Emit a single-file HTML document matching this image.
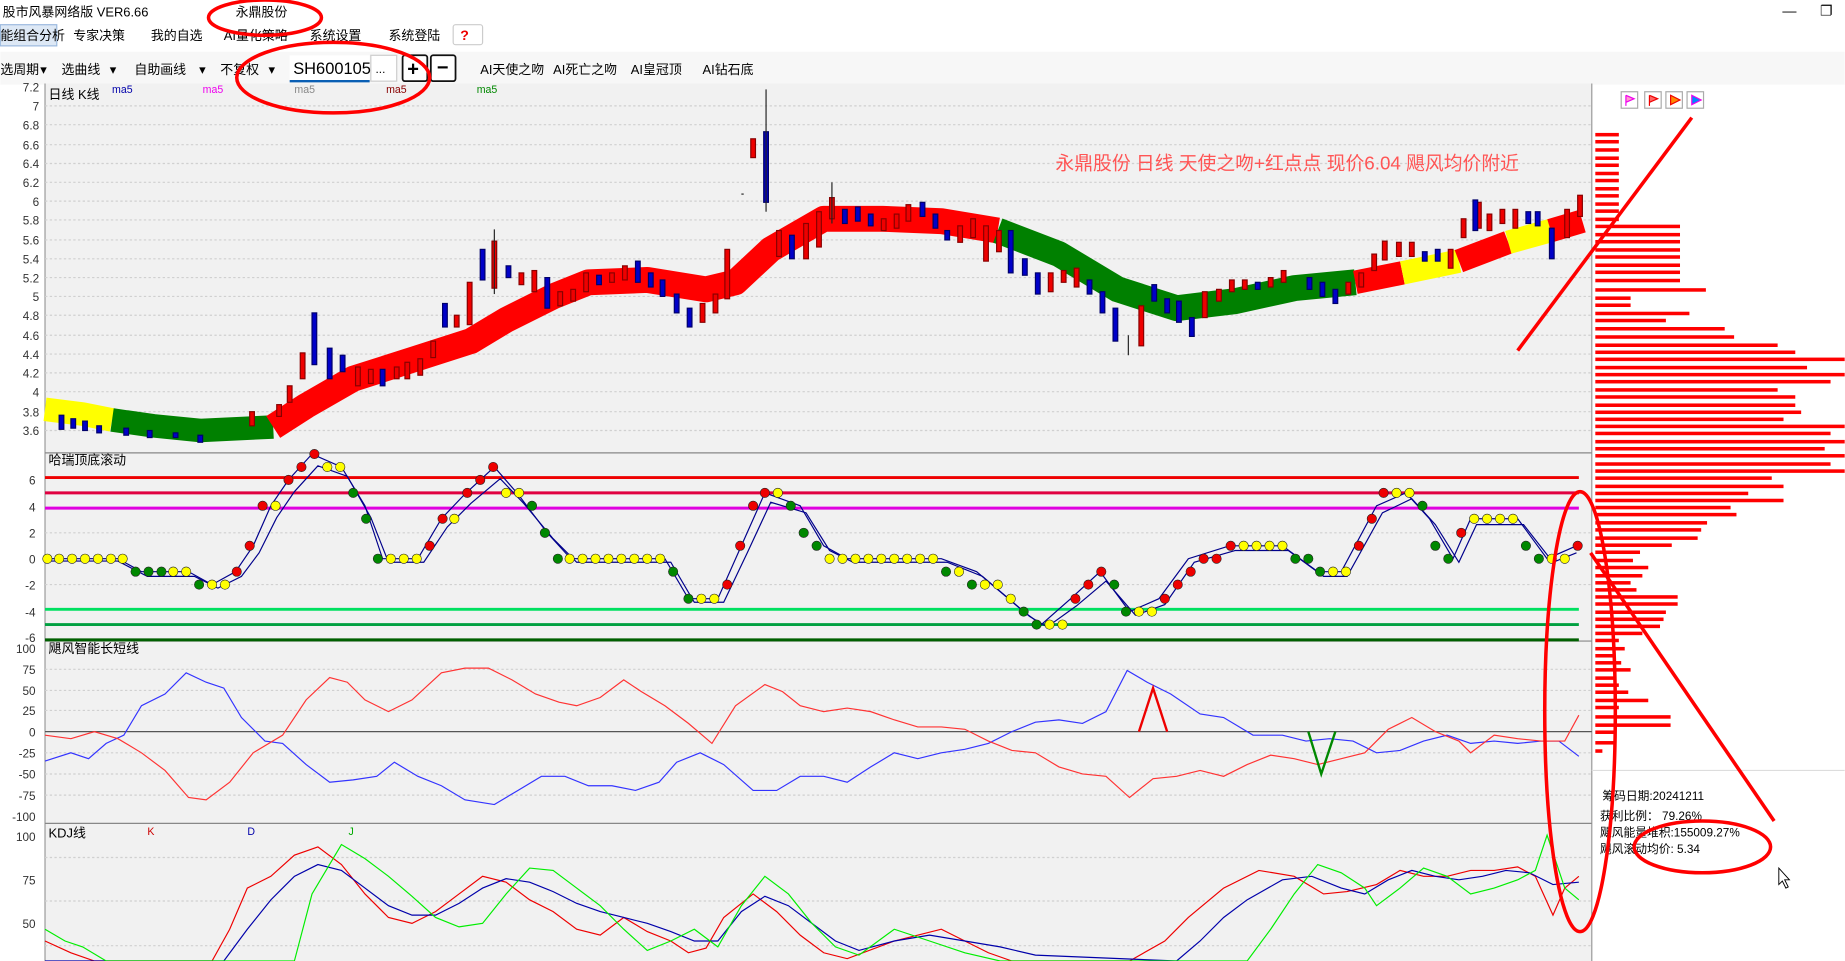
<!DOCTYPE html>
<html><head><meta charset="utf-8"><style>
html,body{margin:0;padding:0;background:#fff;overflow:hidden}
svg{display:block}
text{font-family:"Liberation Sans","Noto Sans CJK SC",sans-serif}
</style></head><body>
<svg width="1845" height="961" viewBox="0 0 1568 817" xmlns="http://www.w3.org/2000/svg">
<rect width="1568" height="817" fill="#fff"/>
<text x="2" y="14" font-size="11" fill="#000">股市风暴网络版 VER6.66</text>
<text x="200" y="14" font-size="11" fill="#000">永鼎股份</text>
<text x="1515" y="13" font-size="12">—</text><text x="1547" y="13" font-size="12">❐</text>
<rect x="0" y="21" width="48" height="18" fill="#dde8f5" stroke="#9bb9de"/>
<g font-size="11" fill="#000">
<text x="0" y="34">能组合分析</text><text x="62" y="34">专家决策</text><text x="128" y="34">我的自选</text><text x="190" y="34">AI量化策略</text><text x="263" y="34">系统设置</text><text x="330" y="34">系统登陆</text>
</g>
<rect x="385" y="21" width="25" height="17" fill="#fff" stroke="#ccc" rx="2"/><text x="391" y="34" font-size="12" fill="#e00" font-weight="bold">?</text>
<rect x="0" y="44" width="1568" height="28" fill="#f7f7f7"/>
<g font-size="11" fill="#000">
<text x="0" y="63">选周期</text><text x="34" y="63">▾</text><text x="52" y="63">选曲线</text><text x="93" y="63">▾</text><text x="114" y="63">自助画线</text><text x="169" y="63">▾</text><text x="187" y="63">不复权</text><text x="228" y="63">▾</text>
<text x="408" y="63">AI天使之吻</text><text x="470" y="63">AI死亡之吻</text><text x="536" y="63">AI皇冠顶</text><text x="597" y="63">AI钻石底</text>
</g>
<rect x="246" y="47" width="68" height="22" fill="#fff"/><line x1="246" y1="69" x2="314" y2="69" stroke="#0a5fb4" stroke-width="2"/>
<text x="249" y="63" font-size="14" fill="#000">SH600105</text>
<rect x="315" y="47" width="22" height="22" fill="#fff" stroke="#ccc"/><text x="319" y="62" font-size="10">...</text>
<rect x="342" y="47" width="21" height="22" fill="#fff" stroke="#111" stroke-width="1.5" rx="2"/><text x="346" y="64" font-size="17" font-weight="bold">+</text>
<rect x="366" y="47" width="21" height="22" fill="#fff" stroke="#111" stroke-width="1.5" rx="2"/><text x="371" y="63" font-size="17" font-weight="bold">−</text>
<rect x="38" y="71" width="1315" height="746" fill="#f1f1f1"/>
<line x1="38" y1="71" x2="38" y2="817" stroke="#999"/>
<line x1="1353" y1="71" x2="1353" y2="817" stroke="#999"/>
<g stroke="#d0d0d0" stroke-dasharray="2,2">
<line x1="38" y1="90" x2="1353" y2="90"/><line x1="38" y1="106" x2="1353" y2="106"/><line x1="38" y1="123" x2="1353" y2="123"/><line x1="38" y1="139" x2="1353" y2="139"/><line x1="38" y1="155" x2="1353" y2="155"/><line x1="38" y1="171" x2="1353" y2="171"/><line x1="38" y1="187" x2="1353" y2="187"/><line x1="38" y1="204" x2="1353" y2="204"/><line x1="38" y1="220" x2="1353" y2="220"/><line x1="38" y1="236" x2="1353" y2="236"/><line x1="38" y1="252" x2="1353" y2="252"/><line x1="38" y1="268" x2="1353" y2="268"/><line x1="38" y1="285" x2="1353" y2="285"/><line x1="38" y1="301" x2="1353" y2="301"/><line x1="38" y1="317" x2="1353" y2="317"/><line x1="38" y1="333" x2="1353" y2="333"/><line x1="38" y1="350" x2="1353" y2="350"/><line x1="38" y1="366" x2="1353" y2="366"/>
<line x1="38" y1="453" x2="1353" y2="453"/><line x1="38" y1="497" x2="1353" y2="497"/>
<line x1="38" y1="569" x2="1353" y2="569"/><line x1="38" y1="587" x2="1353" y2="587"/><line x1="38" y1="604" x2="1353" y2="604"/><line x1="38" y1="640" x2="1353" y2="640"/><line x1="38" y1="658" x2="1353" y2="658"/><line x1="38" y1="676" x2="1353" y2="676"/>
<line x1="38" y1="729" x2="1353" y2="729"/><line x1="38" y1="766" x2="1353" y2="766"/><line x1="38" y1="804" x2="1353" y2="804"/>
</g>
<g stroke="#888"><line x1="38" y1="385" x2="1353" y2="385"/><line x1="38" y1="545" x2="1353" y2="545"/><line x1="38" y1="700" x2="1353" y2="700"/></g>
<g font-size="10" fill="#333" text-anchor="end">
<text x="33" y="78">7.2</text><text x="33" y="94">7</text><text x="33" y="110">6.8</text><text x="33" y="127">6.6</text><text x="33" y="143">6.4</text><text x="33" y="159">6.2</text><text x="33" y="175">6</text><text x="33" y="191">5.8</text><text x="33" y="208">5.6</text><text x="33" y="224">5.4</text><text x="33" y="240">5.2</text><text x="33" y="256">5</text><text x="33" y="272">4.8</text><text x="33" y="289">4.6</text><text x="33" y="305">4.4</text><text x="33" y="321">4.2</text><text x="33" y="337">4</text><text x="33" y="354">3.8</text><text x="33" y="370">3.6</text>
<text x="30" y="412">6</text><text x="30" y="435">4</text><text x="30" y="457">2</text><text x="30" y="479">0</text><text x="30" y="501">-2</text><text x="30" y="524">-4</text><text x="30" y="546">-6</text>
<text x="30" y="555">100</text><text x="30" y="573">75</text><text x="30" y="591">50</text><text x="30" y="608">25</text><text x="30" y="626">0</text><text x="30" y="644">-25</text><text x="30" y="662">-50</text><text x="30" y="680">-75</text><text x="30" y="698">-100</text>
<text x="30" y="715">100</text><text x="30" y="752">75</text><text x="30" y="789">50</text>
</g>
<text x="41" y="84" font-size="11">日线 K线</text>
<g font-size="9"><text x="95" y="79" fill="#00a">ma5</text><text x="172" y="79" fill="#e0e">ma5</text><text x="250" y="79" fill="#888">ma5</text><text x="328" y="79" fill="#800">ma5</text><text x="405" y="79" fill="#080">ma5</text></g>
<text x="41" y="395" font-size="11">哈瑞顶底滚动</text>
<text x="41" y="555" font-size="11">飓风智能长短线</text>
<text x="41" y="712" font-size="11">KDJ线</text>
<g font-size="9"><text x="125" y="710" fill="#c00">K</text><text x="210" y="710" fill="#00a">D</text><text x="296" y="710" fill="#0a0">J</text></g>
<text x="897" y="144" font-size="16" fill="#f55" font-family="Liberation Serif,Noto Serif CJK SC,serif">永鼎股份  日线  天使之吻+红点点  现价6.04  飓风均价附近</text>
<g fill="none" stroke-width="20" stroke-linejoin="round">
<polyline stroke="#ffff00" points="38,348 70,352 95,357"/>
<polyline stroke="#008000" points="95,357 130,362 170,366 232,363"/>
<polyline stroke="#ff0000" stroke-width="22" points="232,363 260,345 300,322 350,306 400,290 430,272 470,252 500,240 550,238 600,246 625,240 655,212 700,186 750,186 800,188 848,196"/>
<polyline stroke="#008000" stroke-width="22" points="848,196 900,216 950,246 1000,262 1050,256 1100,245 1152,240"/>
<polyline stroke="#ff0000" points="1152,240 1192,232"/>
<polyline stroke="#ffff00" points="1192,232 1240,222"/>
<polyline stroke="#ff0000" points="1240,222 1282,206"/>
<polyline stroke="#ffff00" points="1282,206 1318,196"/>
<polyline stroke="#ff0000" points="1318,196 1345,188"/>
</g>
<g stroke-width="1">
<g fill="#e00" stroke="#800"><rect x="255" y="300" width="4" height="22"/><rect x="302" y="312" width="4" height="16"/><rect x="355" y="305" width="4" height="14"/><rect x="397" y="240" width="4" height="36"/><rect x="418" y="205" width="4" height="40"/><rect x="452" y="230" width="4" height="18"/><rect x="496" y="232" width="4" height="16"/><rect x="595" y="258" width="4" height="16"/><rect x="616" y="212" width="4" height="42"/><rect x="638" y="118" width="4" height="16"/><rect x="660" y="196" width="4" height="22"/><rect x="694" y="180" width="4" height="30"/><rect x="705" y="168" width="4" height="18"/><rect x="770" y="174" width="4" height="14"/><rect x="825" y="186" width="4" height="16"/><rect x="968" y="260" width="4" height="34"/><rect x="1022" y="248" width="4" height="22"/><rect x="1175" y="205" width="4" height="16"/><rect x="1255" y="172" width="4" height="22"/><rect x="1330" y="178" width="4" height="24"/><rect x="1341" y="166" width="4" height="18"/><rect x="212" y="350" width="4" height="12"/><rect x="235" y="344" width="4" height="10"/>
<rect x="244" y="328" width="4" height="14"/><rect x="313" y="314" width="4" height="12"/><rect x="335" y="312" width="4" height="10"/><rect x="344" y="308" width="4" height="14"/><rect x="366" y="290" width="4" height="14"/><rect x="386" y="268" width="4" height="10"/><rect x="441" y="232" width="4" height="10"/><rect x="474" y="248" width="4" height="12"/><rect x="485" y="246" width="4" height="10"/><rect x="518" y="232" width="4" height="8"/><rect x="529" y="226" width="4" height="12"/><rect x="606" y="250" width="4" height="16"/><rect x="683" y="190" width="4" height="30"/><rect x="749" y="186" width="4" height="10"/><rect x="760" y="182" width="4" height="12"/><rect x="814" y="192" width="4" height="14"/><rect x="836" y="192" width="4" height="30"/><rect x="847" y="196" width="4" height="18"/><rect x="891" y="232" width="4" height="16"/><rect x="902" y="230" width="4" height="10"/><rect x="913" y="228" width="4" height="16"/><rect x="1034" y="246" width="4" height="10"/><rect x="1045" y="238" width="4" height="10"/><rect x="1056" y="238" width="4" height="8"/><rect x="1078" y="236" width="4" height="8"/><rect x="1089" y="230" width="4" height="10"/><rect x="1144" y="240" width="4" height="10"/><rect x="1155" y="232" width="4" height="12"/><rect x="1166" y="216" width="4" height="14"/><rect x="1187" y="206" width="4" height="12"/><rect x="1198" y="206" width="4" height="12"/><rect x="1231" y="212" width="4" height="16"/><rect x="1242" y="186" width="4" height="16"/><rect x="1264" y="182" width="4" height="14"/><rect x="1275" y="178" width="4" height="12"/><rect x="1286" y="178" width="4" height="16"/></g>
<g fill="#0000c8" stroke="#00006a"><rect x="265" y="266" width="4" height="44"/><rect x="278" y="296" width="4" height="26"/><rect x="408" y="212" width="4" height="26"/><rect x="463" y="236" width="4" height="26"/><rect x="540" y="222" width="4" height="18"/><rect x="561" y="238" width="4" height="14"/><rect x="573" y="250" width="4" height="16"/><rect x="584" y="262" width="4" height="16"/><rect x="649" y="112" width="4" height="60"/><rect x="671" y="200" width="4" height="20"/><rect x="727" y="176" width="4" height="12"/><rect x="782" y="172" width="4" height="12"/><rect x="857" y="196" width="4" height="36"/><rect x="880" y="232" width="4" height="18"/><rect x="935" y="248" width="4" height="18"/><rect x="946" y="262" width="4" height="28"/><rect x="1000" y="256" width="4" height="18"/><rect x="1252" y="170" width="4" height="26"/><rect x="1317" y="194" width="4" height="26"/><rect x="1305" y="180" width="4" height="12"/><rect x="50" y="353" width="4" height="12"/><rect x="70" y="358" width="4" height="8"/>
<rect x="60" y="356" width="4" height="8"/><rect x="82" y="362" width="4" height="6"/><rect x="105" y="364" width="4" height="6"/><rect x="125" y="366" width="4" height="6"/><rect x="147" y="368" width="4" height="4"/><rect x="168" y="370" width="4" height="6"/><rect x="289" y="302" width="4" height="14"/><rect x="323" y="314" width="4" height="14"/><rect x="376" y="258" width="4" height="20"/><rect x="430" y="226" width="4" height="10"/><rect x="507" y="234" width="4" height="8"/><rect x="551" y="232" width="4" height="12"/><rect x="716" y="178" width="4" height="12"/><rect x="738" y="182" width="4" height="10"/><rect x="793" y="182" width="4" height="12"/><rect x="803" y="196" width="4" height="8"/><rect x="869" y="220" width="4" height="14"/><rect x="924" y="238" width="4" height="12"/><rect x="979" y="242" width="4" height="14"/><rect x="990" y="254" width="4" height="12"/><rect x="1011" y="270" width="4" height="16"/><rect x="1067" y="240" width="4" height="6"/><rect x="1111" y="236" width="4" height="10"/><rect x="1122" y="240" width="4" height="12"/><rect x="1133" y="246" width="4" height="12"/><rect x="1209" y="214" width="4" height="8"/><rect x="1220" y="212" width="4" height="10"/><rect x="1297" y="180" width="4" height="10"/></g>
<g stroke="#222"><line x1="651" y1="76" x2="651" y2="180"/><line x1="630" y1="165" x2="632" y2="165"/><line x1="420" y1="195" x2="420" y2="250"/><line x1="707" y1="155" x2="707" y2="190"/><line x1="959" y1="285" x2="959" y2="302"/></g>
</g>
<g stroke-width="2.5"><line x1="38" y1="406" x2="1342" y2="406" stroke="#e00"/><line x1="38" y1="419" x2="1342" y2="419" stroke="#e00040"/><line x1="38" y1="432" x2="1342" y2="432" stroke="#e000e0"/><line x1="38" y1="518" x2="1342" y2="518" stroke="#00e060"/><line x1="38" y1="531" x2="1342" y2="531" stroke="#00a040"/><line x1="38" y1="544" x2="1342" y2="544" stroke="#006000"/></g>
<g fill="none" stroke="#00008b" stroke-width="1">
<polyline points="38,475 100,475 120,486 160,486 180,497 200,486 215,464 230,430 245,408 265,386 290,397 310,430 325,475 355,475 375,441 395,420 420,397 440,420 465,453 485,475 565,475 585,509 610,509 630,464 650,419 680,430 700,464 720,475 800,475 830,486 870,520 885,531 910,509 935,486 960,520 985,509 1010,475 1045,464 1090,464 1120,486 1140,486 1170,430 1195,419 1215,441 1235,475 1250,441 1290,441 1315,475 1340,464"/>
<polyline points="38,477 100,477 125,490 165,490 185,500 205,490 220,470 235,440 250,418 270,396 295,405 315,440 330,478 360,478 380,448 400,428 425,407 445,428 470,458 490,478 570,478 590,512 615,512 635,470 655,427 685,436 705,468 725,478 805,478 835,490 875,524 890,533 915,515 940,494 965,523 990,514 1015,478 1050,468 1095,468 1125,490 1145,490 1175,436 1200,424 1220,446 1240,478 1255,446 1295,446 1320,478 1340,470"/>
</g>
<g stroke="#222" stroke-width="0.5">
<g fill="#ff0"><circle cx="40" cy="475" r="4"/><circle cx="50" cy="475" r="4"/><circle cx="61" cy="475" r="4"/><circle cx="72" cy="475" r="4"/><circle cx="83" cy="475" r="4"/><circle cx="94" cy="475" r="4"/><circle cx="104" cy="475" r="4"/><circle cx="147" cy="486" r="4"/><circle cx="158" cy="486" r="4"/><circle cx="180" cy="497" r="4"/><circle cx="191" cy="497" r="4"/><circle cx="234" cy="430" r="4"/><circle cx="278" cy="397" r="4"/><circle cx="289" cy="397" r="4"/><circle cx="332" cy="475" r="4"/><circle cx="343" cy="475" r="4"/><circle cx="354" cy="475" r="4"/><circle cx="386" cy="441" r="4"/><circle cx="430" cy="419" r="4"/><circle cx="441" cy="419" r="4"/><circle cx="484" cy="475" r="4"/><circle cx="495" cy="475" r="4"/><circle cx="506" cy="475" r="4"/><circle cx="517" cy="475" r="4"/><circle cx="528" cy="475" r="4"/><circle cx="539" cy="475" r="4"/><circle cx="550" cy="475" r="4"/><circle cx="561" cy="475" r="4"/><circle cx="596" cy="509" r="4"/><circle cx="607" cy="509" r="4"/><circle cx="661" cy="419" r="4"/><circle cx="705" cy="475" r="4"/><circle cx="716" cy="475" r="4"/><circle cx="727" cy="475" r="4"/><circle cx="738" cy="475" r="4"/><circle cx="749" cy="475" r="4"/><circle cx="760" cy="475" r="4"/><circle cx="771" cy="475" r="4"/><circle cx="782" cy="475" r="4"/><circle cx="793" cy="475" r="4"/><circle cx="815" cy="486" r="4"/><circle cx="837" cy="497" r="4"/><circle cx="848" cy="497" r="4"/><circle cx="859" cy="509" r="4"/><circle cx="892" cy="531" r="4"/><circle cx="903" cy="531" r="4"/><circle cx="968" cy="520" r="4"/><circle cx="979" cy="520" r="4"/><circle cx="1057" cy="464" r="4"/><circle cx="1068" cy="464" r="4"/><circle cx="1079" cy="464" r="4"/><circle cx="1090" cy="464" r="4"/><circle cx="1133" cy="486" r="4"/><circle cx="1144" cy="486" r="4"/><circle cx="1187" cy="419" r="4"/><circle cx="1198" cy="419" r="4"/><circle cx="1253" cy="441" r="4"/><circle cx="1264" cy="441" r="4"/><circle cx="1275" cy="441" r="4"/><circle cx="1286" cy="441" r="4"/><circle cx="1319" cy="475" r="4"/><circle cx="1330" cy="475" r="4"/></g>
<g fill="#e00"><circle cx="201" cy="486" r="4"/><circle cx="212" cy="464" r="4"/><circle cx="223" cy="430" r="4"/><circle cx="245" cy="408" r="4"/><circle cx="256" cy="397" r="4"/><circle cx="267" cy="386" r="4"/><circle cx="365" cy="464" r="4"/><circle cx="376" cy="441" r="4"/><circle cx="397" cy="419" r="4"/><circle cx="408" cy="408" r="4"/><circle cx="419" cy="397" r="4"/><circle cx="618" cy="497" r="4"/><circle cx="629" cy="464" r="4"/><circle cx="640" cy="430" r="4"/><circle cx="650" cy="419" r="4"/><circle cx="914" cy="509" r="4"/><circle cx="925" cy="497" r="4"/><circle cx="936" cy="486" r="4"/><circle cx="990" cy="509" r="4"/><circle cx="1001" cy="497" r="4"/><circle cx="1012" cy="486" r="4"/><circle cx="1023" cy="475" r="4"/><circle cx="1034" cy="475" r="4"/><circle cx="1046" cy="464" r="4"/><circle cx="1155" cy="464" r="4"/><circle cx="1166" cy="441" r="4"/><circle cx="1176" cy="419" r="4"/><circle cx="1242" cy="453" r="4"/><circle cx="1341" cy="464" r="4"/></g>
<g fill="#080"><circle cx="115" cy="486" r="4"/><circle cx="126" cy="486" r="4"/><circle cx="137" cy="486" r="4"/><circle cx="169" cy="497" r="4"/><circle cx="300" cy="419" r="4"/><circle cx="311" cy="441" r="4"/><circle cx="321" cy="475" r="4"/><circle cx="452" cy="430" r="4"/><circle cx="463" cy="453" r="4"/><circle cx="474" cy="475" r="4"/><circle cx="572" cy="486" r="4"/><circle cx="585" cy="509" r="4"/><circle cx="672" cy="430" r="4"/><circle cx="683" cy="453" r="4"/><circle cx="694" cy="464" r="4"/><circle cx="804" cy="486" r="4"/><circle cx="826" cy="497" r="4"/><circle cx="870" cy="520" r="4"/><circle cx="881" cy="531" r="4"/><circle cx="947" cy="497" r="4"/><circle cx="957" cy="520" r="4"/><circle cx="1101" cy="475" r="4"/><circle cx="1112" cy="475" r="4"/><circle cx="1122" cy="486" r="4"/><circle cx="1209" cy="430" r="4"/><circle cx="1220" cy="464" r="4"/><circle cx="1231" cy="475" r="4"/><circle cx="1297" cy="464" r="4"/><circle cx="1308" cy="475" r="4"/></g>
</g>
<line x1="38" y1="622" x2="1353" y2="622" stroke="#555"/>
<polyline fill="none" stroke="#33f" stroke-width="1" points="38,647 60,640 75,645 90,632 105,625 120,600 140,590 158,572 175,580 190,585 205,610 225,630 240,632 260,650 280,665 300,663 320,660 335,648 355,660 375,668 395,680 420,684 440,672 460,660 480,660 500,668 520,668 540,672 560,665 575,648 595,640 615,650 640,672 660,672 680,660 700,660 720,665 740,652 760,640 780,645 800,640 820,637 840,632 860,622 880,614 900,612 920,615 940,605 958,570 975,580 995,590 1020,607 1040,610 1065,625 1090,625 1110,630 1130,628 1150,630 1170,640 1190,638 1210,630 1230,625 1250,632 1270,630 1290,632 1310,630 1325,630 1342,643"/>
<polyline fill="none" stroke="#f33" stroke-width="1" points="38,625 60,628 80,622 100,628 120,640 140,655 160,678 175,680 195,665 215,640 240,625 260,595 280,576 295,580 310,595 330,605 350,595 375,572 395,568 415,568 435,578 455,590 475,597 490,600 510,593 530,578 545,588 565,600 585,615 605,632 625,600 650,582 665,588 680,600 700,605 720,602 740,605 760,612 780,618 800,618 820,620 840,630 860,638 880,640 900,652 920,658 940,660 960,678 980,662 1000,660 1020,655 1040,660 1060,650 1080,642 1100,645 1120,650 1140,645 1160,640 1180,620 1200,610 1220,622 1240,630 1250,640 1270,625 1290,628 1310,630 1330,630 1342,608"/>
<polyline fill="none" stroke="#e00" stroke-width="2" points="968,622 980,585 992,622"/>
<polyline fill="none" stroke="#080" stroke-width="2" points="1112,622 1123,658 1135,622"/>
<polyline fill="none" stroke="#e00" stroke-width="1" points="38,800 60,810 80,817 180,817 195,790 210,755 230,745 250,727 270,720 290,735 310,760 330,780 350,785 370,775 390,760 410,745 430,750 450,765 470,775 490,790 510,795 530,780 550,792 570,800 585,810 600,806 615,780 640,760 660,775 680,795 700,810 720,815 760,800 800,790 820,800 840,810 860,817 960,817 990,800 1010,780 1040,755 1070,740 1100,745 1125,760 1145,758 1170,752 1190,740 1210,745 1230,745 1250,740 1270,740 1290,737 1305,745 1320,778 1330,755 1342,745"/>
<polyline fill="none" stroke="#00a" stroke-width="1" points="38,817 190,817 210,790 230,765 250,745 270,735 290,740 310,755 330,770 350,778 370,778 390,768 410,755 430,747 450,750 470,758 490,768 510,775 530,780 550,785 570,792 590,800 610,800 630,775 650,762 670,770 690,785 710,800 730,808 760,800 790,795 820,800 850,805 880,812 1000,817 1020,800 1040,780 1060,765 1090,748 1115,745 1140,755 1160,760 1180,748 1200,740 1220,745 1240,748 1260,745 1280,740 1300,742 1320,752 1342,750"/>
<polyline fill="none" stroke="#0e0" stroke-width="1" points="38,790 55,800 70,805 90,817 250,817 265,760 290,718 310,730 330,745 350,762 370,780 390,788 410,785 430,760 450,738 470,740 490,755 510,770 530,790 550,808 570,800 590,790 610,805 630,770 650,745 670,760 690,785 710,805 730,812 760,790 790,800 820,810 850,817 1060,817 1080,790 1100,760 1120,735 1140,742 1160,755 1170,770 1190,755 1210,738 1230,745 1250,760 1270,755 1290,748 1305,740 1315,710 1330,755 1342,765"/>
<g fill="#fff" stroke="#aaa"><rect x="1378" y="78" width="14" height="14"/><rect x="1398" y="78" width="14" height="14"/><rect x="1416" y="78" width="14" height="14"/><rect x="1434" y="78" width="14" height="14"/></g>
<g><path d="M1382,81 v9 M1382,81 l7,3 -7,3" stroke="#e0e" fill="#f9c"/><path d="M1402,81 v9 M1402,81 l7,3 -7,3" stroke="#e00" fill="#f66"/><path d="M1420,81 l8,4 -8,4z" fill="#f80" stroke="#e00"/><path d="M1438,81 l8,4 -8,4z" fill="#08f" stroke="#e0e"/></g>
<g fill="#f00">
<rect x="1356" y="113" width="20" height="3"/><rect x="1356" y="119" width="20" height="3"/><rect x="1356" y="126" width="20" height="3"/><rect x="1356" y="133" width="20" height="3"/><rect x="1356" y="139" width="20" height="3"/><rect x="1356" y="146" width="20" height="3"/><rect x="1356" y="152" width="20" height="3"/><rect x="1356" y="159" width="20" height="3"/><rect x="1356" y="165" width="20" height="3"/><rect x="1356" y="172" width="20" height="3"/><rect x="1356" y="178" width="20" height="3"/><rect x="1356" y="185" width="20" height="3"/><rect x="1356" y="191" width="72" height="3"/><rect x="1356" y="198" width="72" height="3"/><rect x="1356" y="204" width="72" height="3"/><rect x="1356" y="211" width="72" height="3"/><rect x="1356" y="217" width="72" height="3"/><rect x="1356" y="224" width="72" height="3"/><rect x="1356" y="230" width="72" height="3"/><rect x="1356" y="237" width="72" height="3"/><rect x="1356" y="245" width="94" height="3"/><rect x="1356" y="252" width="30" height="3"/><rect x="1356" y="258" width="30" height="3"/><rect x="1356" y="265" width="80" height="3"/><rect x="1356" y="271" width="60" height="3"/><rect x="1356" y="278" width="110" height="3"/><rect x="1356" y="285" width="118" height="3"/><rect x="1356" y="292" width="155" height="3"/><rect x="1356" y="298" width="170" height="3"/><rect x="1356" y="304" width="212" height="3"/><rect x="1356" y="311" width="180" height="3"/><rect x="1356" y="317" width="212" height="3"/><rect x="1356" y="323" width="200" height="3"/><rect x="1356" y="330" width="155" height="3"/><rect x="1356" y="336" width="170" height="3"/><rect x="1356" y="343" width="170" height="3"/><rect x="1356" y="349" width="175" height="3"/><rect x="1356" y="355" width="160" height="3"/><rect x="1356" y="361" width="212" height="3"/><rect x="1356" y="367" width="200" height="3"/><rect x="1356" y="374" width="212" height="3"/><rect x="1356" y="380" width="195" height="3"/><rect x="1356" y="386" width="212" height="3"/><rect x="1356" y="393" width="200" height="3"/><rect x="1356" y="399" width="212" height="3"/><rect x="1356" y="405" width="150" height="3"/><rect x="1356" y="412" width="160" height="3"/><rect x="1356" y="418" width="130" height="3"/><rect x="1356" y="424" width="160" height="3"/><rect x="1356" y="430" width="115" height="3"/><rect x="1356" y="436" width="120" height="3"/><rect x="1356" y="443" width="95" height="3"/><rect x="1356" y="449" width="90" height="3"/><rect x="1356" y="456" width="87" height="3"/><rect x="1356" y="462" width="65" height="3"/><rect x="1356" y="468" width="38" height="3"/><rect x="1356" y="475" width="32" height="3"/><rect x="1356" y="481" width="45" height="3"/><rect x="1356" y="488" width="40" height="3"/><rect x="1356" y="494" width="30" height="3"/><rect x="1356" y="500" width="35" height="3"/><rect x="1356" y="506" width="70" height="3"/><rect x="1356" y="512" width="70" height="3"/><rect x="1356" y="519" width="60" height="3"/><rect x="1356" y="525" width="58" height="3"/><rect x="1356" y="531" width="55" height="3"/><rect x="1356" y="537" width="40" height="3"/><rect x="1356" y="543" width="20" height="3"/><rect x="1356" y="550" width="25" height="3"/><rect x="1356" y="556" width="15" height="3"/><rect x="1356" y="562" width="22" height="3"/><rect x="1356" y="568" width="30" height="3"/><rect x="1356" y="575" width="18" height="3"/><rect x="1356" y="581" width="20" height="3"/><rect x="1356" y="587" width="28" height="3"/><rect x="1356" y="594" width="45" height="3"/><rect x="1356" y="600" width="20" height="3"/><rect x="1356" y="608" width="64" height="3"/><rect x="1356" y="615" width="64" height="3"/><rect x="1356" y="621" width="18" height="3"/><rect x="1356" y="630" width="18" height="3"/><rect x="1356" y="637" width="6" height="3"/>
</g>
<line x1="1353" y1="655" x2="1568" y2="655" stroke="#ddd"/>
<g font-size="10" fill="#000"><text x="1362" y="680">筹码日期:20241211</text><text x="1360" y="697">获利比例：  79.26%</text><text x="1360" y="711">飓风能量堆积:155009.27%</text><text x="1360" y="725">飓风滚动均价:  5.34</text></g>
<path d="M1512,738 l0,14 3,-3 3,6 2,-1 -3,-6 4,0z" fill="#fff" stroke="#000" stroke-width="0.8"/>
<g fill="none" stroke="#f00" stroke-width="3">
<ellipse cx="225" cy="15" rx="48" ry="15"/>
<ellipse cx="283" cy="66" rx="82" ry="30"/>
<ellipse cx="1343" cy="605" rx="30" ry="187"/>
<ellipse cx="1447" cy="720" rx="58" ry="22"/>
<line x1="1290" y1="298" x2="1438" y2="100"/>
<line x1="1508" y1="698" x2="1352" y2="470"/>
</g>
</svg>
</body></html>
